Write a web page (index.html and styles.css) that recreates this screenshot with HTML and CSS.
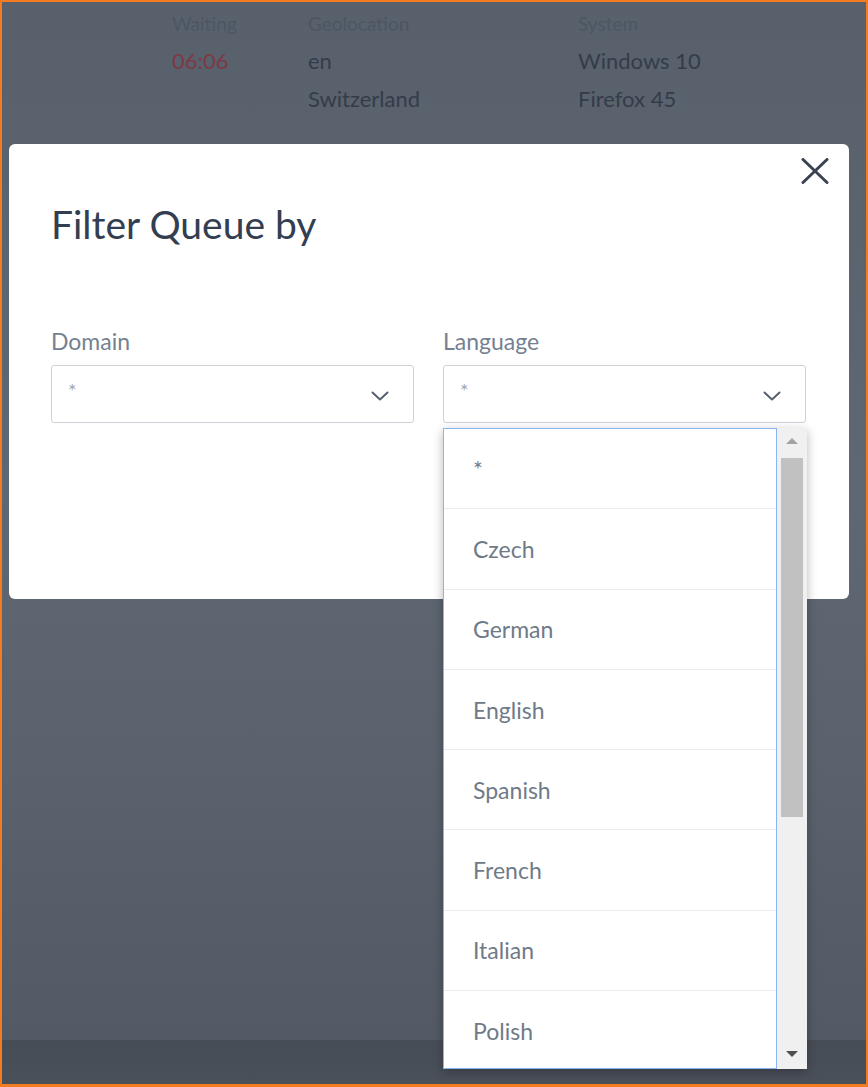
FILE: index.html
```html
<!DOCTYPE html>
<html lang="en">
<head>
<meta charset="utf-8">
<title>Filter Queue by</title>
<link rel="stylesheet" href="styles.css">
</head>
<body>
<div class="frame">
  <div class="info">
    <div class="info-col col-waiting">
      <div class="info-label">Waiting</div>
      <div class="info-value time">06:06</div>
    </div>
    <div class="info-col col-geo">
      <div class="info-label">Geolocation</div>
      <div class="info-value">en</div>
      <div class="info-value">Switzerland</div>
    </div>
    <div class="info-col">
      <div class="info-label">System</div>
      <div class="info-value">Windows 10</div>
      <div class="info-value">Firefox 45</div>
    </div>
  </div>

  <div class="modal">
    <button class="close" aria-label="Close">
      <svg width="28" height="26" viewBox="0 0 28 26"><path d="M2 1.5 L26 24.5 M26 1.5 L2 24.5" stroke="#3a4353" stroke-width="3" stroke-linecap="round" fill="none"/></svg>
    </button>
    <h1 class="title">Filter Queue by</h1>
    <div class="fields">
      <div class="field">
        <label class="field-label">Domain</label>
        <div class="select">
          <span class="select-value">*</span>
          <svg class="chev" width="18" height="10" viewBox="0 0 18 10"><path d="M1.5 1.5 L9 8.5 L16.5 1.5" stroke="#566070" stroke-width="2" fill="none" stroke-linecap="round" stroke-linejoin="round"/></svg>
        </div>
      </div>
      <div class="field lang">
        <label class="field-label">Language</label>
        <div class="select">
          <span class="select-value">*</span>
          <svg class="chev" width="18" height="10" viewBox="0 0 18 10"><path d="M1.5 1.5 L9 8.5 L16.5 1.5" stroke="#566070" stroke-width="2" fill="none" stroke-linecap="round" stroke-linejoin="round"/></svg>
        </div>
        <div class="dropdown">
          <ul class="options">
            <li class="option">*</li>
            <li class="option">Czech</li>
            <li class="option">German</li>
            <li class="option">English</li>
            <li class="option">Spanish</li>
            <li class="option">French</li>
            <li class="option">Italian</li>
            <li class="option">Polish</li>
          </ul>
          <div class="scrollbar">
            <span class="arrow up"></span>
            <div class="track"><div class="thumb"></div></div>
            <span class="arrow down"></span>
          </div>
        </div>
      </div>
    </div>
  </div>

  <div class="footer-band"></div>
</div>
</body>
</html>
```

FILE: styles.css
```css
* { box-sizing: border-box; }
html, body { margin: 0; padding: 0; }
body {
  font-family: Lato, "Liberation Sans", sans-serif;
  width: 868px;
  height: 1087px;
  overflow: hidden;
}
.frame {
  width: 868px;
  height: 1087px;
  border: 2px solid #f47b20;
  border-bottom-width: 3px;
  background: linear-gradient(to bottom, #58606b 0%, #5e6773 45%, #5a626d 70%, #525864 100%);
  display: flex;
  flex-direction: column;
  overflow: hidden;
}
.info {
  display: flex;
  padding: 10px 0 0 170px;
}
.info-col { display: flex; flex-direction: column; }
.col-waiting { width: 136px; }
.col-geo { width: 270px; }
.info-label {
  font-size: 19px;
  line-height: 24px;
  color: #4d5663;
  margin-bottom: 6px;
}
.info-value {
  font-size: 22px;
  line-height: 38px;
  color: #343c4a;
}
.info-value.time { color: #7b3a46; }

.modal {
  position: relative;
  margin: 26px 0 0 7px;
  width: 840px;
  height: 455px;
  background: #fff;
  border-radius: 6px;
  padding: 57px 43px 0 42px;
}
.close {
  position: absolute;
  top: 14px;
  right: 20px;
  width: 28px;
  height: 26px;
  padding: 0;
  border: 0;
  background: transparent;
}
.close svg { display: block; }
.title {
  margin: 0;
  font-size: 39px;
  line-height: 47px;
  font-weight: 400;
  color: #333e51;
}
.fields {
  margin-top: 80px;
  display: grid;
  grid-template-columns: 363px 363px;
  column-gap: 29px;
}
.field { position: relative; }
.field-label {
  display: block;
  font-size: 23px;
  line-height: 26px;
  color: #76818f;
  margin-bottom: 11px;
}
.select {
  height: 58px;
  border: 1px solid #cdd2d8;
  border-radius: 3px;
  display: flex;
  align-items: flex-start;
  justify-content: space-between;
  padding: 11px 24px 0 16px;
}
.select-value {
  font-size: 20px;
  line-height: 26px;
  color: #a0a7b1;
}
.chev { margin-top: 14px; }

.dropdown {
  position: absolute;
  z-index: 10;
  top: 100px;
  left: 0;
  width: 364px;
  height: 641px;
  display: flex;
  background: #fff;
  box-shadow: 0 3px 10px rgba(0, 0, 0, 0.28);
}
.options {
  list-style: none;
  margin: 0;
  padding: 0;
  width: 334px;
  height: 641px;
  border: 1px solid #8ab4f8;
  overflow: hidden;
}
.option {
  height: 80.3px;
  border-bottom: 1px solid #e9ebee;
  display: flex;
  align-items: center;
  padding-left: 29px;
  font-size: 23px;
  color: #6f7a88;
}
.scrollbar {
  width: 30px;
  height: 641px;
  background: #f0f0f0;
  display: flex;
  flex-direction: column;
  align-items: center;
}
.arrow {
  width: 0;
  height: 0;
  border-left: 6px solid transparent;
  border-right: 6px solid transparent;
}
.arrow.up {
  margin-top: 10px;
  border-bottom: 6px solid #a3a3a3;
}
.arrow.down {
  margin-bottom: 12px;
  border-top: 6px solid #505050;
}
.track {
  flex: 1;
  width: 100%;
  padding: 14px 4px 0 4px;
}
.thumb {
  width: 22px;
  height: 359px;
  background: #c1c1c1;
}

.footer-band {
  margin-top: auto;
  height: 44px;
  background: linear-gradient(to bottom, #474d57, #4a505a);
}
```
